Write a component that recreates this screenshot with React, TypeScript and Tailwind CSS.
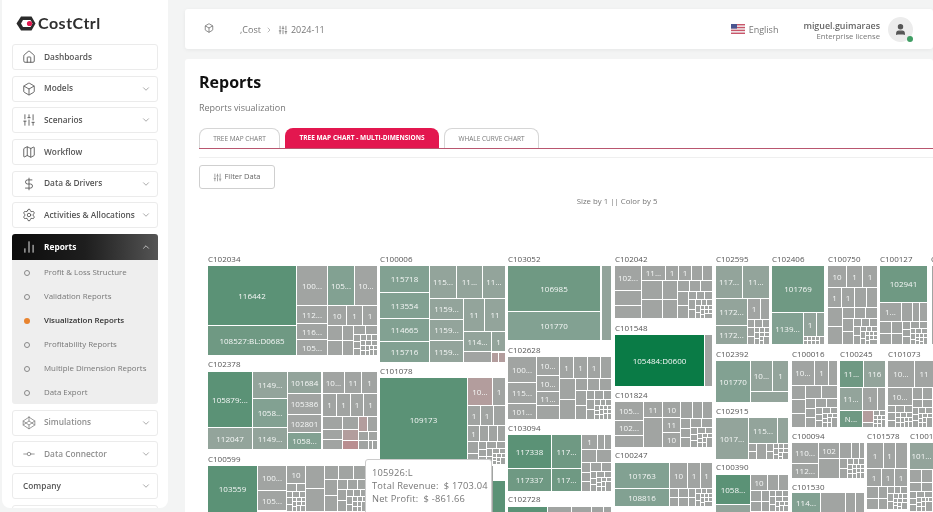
import React from 'react';
import {
  House,
  Box,
  SlidersVertical,
  Map as MapIcon,
  DollarSign,
  Settings,
  ChartNoAxesColumn,
  Codepen,
  GitCommitHorizontal,
  ChevronDown,
  ChevronUp,
  ChevronRight,
  User,
} from 'lucide-react';

type Cell = [number, number, number, number, string?, string?];

const FILLS: Record<string, string> = {
  s: '#5b9276',
  m: '#6f9983',
  l: '#82a192',
  p: '#93a49b',
  g: '#a1a4a2',
  r: '#b39d9d',
  R: '#b98e90',
  b: '#0a7b46',
};

// x1, y1, x2, y2, label, fill
const CELLS: Cell[] = [
  // C102034
  [208, 266, 296, 325, '116442', 's'],
  [208, 326, 296, 355, '108527:BL:D0685', 'm'],
  [297, 266, 327, 305, '100...'],
  [328, 266, 354, 305, '105...', 'l'],
  [355, 266, 377, 305, '10...'],
  [297, 306, 327, 323, '112...'],
  [297, 324, 327, 339, '116...'],
  [297, 340, 327, 355, '105...'],
  [328, 306, 346, 325, '10'],
  [347, 306, 362, 325, '1'],
  [363, 306, 377, 325, '1'],
  // C100006
  [380, 266, 429, 292, '115718', 'l'],
  [380, 293, 429, 318, '113554', 'l'],
  [380, 319, 429, 341, '114665', 'l'],
  [380, 342, 429, 362, '115716', 'l'],
  [430, 266, 456, 298, '115...', 'p'],
  [457, 266, 482, 298, '11...', 'p'],
  [483, 266, 505, 298, '11...', 'p'],
  [430, 299, 463, 319, '1159...', 'p'],
  [430, 320, 463, 340, '1159...', 'p'],
  [430, 341, 463, 362, '1159...', 'p'],
  [464, 299, 484, 331, '11', 'p'],
  [485, 299, 505, 331, '11', 'p'],
  [464, 332, 491, 351, '114...', 'p'],
  [492, 332, 505, 351, '1', 'p'],
  [464, 352, 491, 362],
  [492, 353, 498, 362, undefined, 'r'],
  [499, 353, 505, 362, undefined, 'r'],
  // C102378
  [208, 372, 252, 427, '105879:...', 's'],
  [208, 428, 252, 449, '112047', 'p'],
  [253, 372, 287, 398, '1149...', 'p'],
  [253, 399, 287, 427, '1058...', 'l'],
  [253, 428, 287, 449, '1149...', 'p'],
  [288, 372, 321, 393, '101684', 'p'],
  [288, 394, 321, 414, '105386'],
  [288, 415, 321, 432, '102801'],
  [288, 433, 321, 449, '1058...', 'l'],
  [323, 372, 344, 393, '10...'],
  [345, 372, 361, 393, '11'],
  [362, 372, 377, 393, '1'],
  [323, 394, 336, 416, '1'],
  [337, 394, 350, 416, '1'],
  [351, 394, 363, 416, '1'],
  [364, 394, 377, 416, '1'],
  [323, 417, 342, 429],
  [323, 430, 342, 439],
  [323, 440, 342, 449],
  [343, 417, 358, 429],
  [343, 430, 358, 440, undefined, 'r'],
  [343, 441, 358, 449, undefined, 'R'],
  [359, 417, 367, 431, undefined, 'r'],
  [368, 417, 377, 431],
  [359, 432, 368, 440],
  [369, 432, 377, 440],
  [359, 441, 368, 449],
  [369, 441, 372, 449],
  [373, 441, 377, 449],
  // C100599
  [208, 466, 257, 512, '103559', 's'],
  [258, 466, 286, 490, '100...'],
  [258, 491, 286, 510, '105...'],
  [287, 466, 305, 483, '10'],
  [493, 481, 505, 512, undefined, 's'],
  // C101078
  [380, 378, 467, 462, '109173', 's'],
  [468, 378, 492, 405, '10...', 'r'],
  [493, 378, 505, 405, '1'],
  [468, 406, 480, 425, '1'],
  [481, 406, 493, 425, '1'],
  [494, 406, 505, 425],
  [468, 426, 479, 441, '1'],
  [480, 426, 488, 441],
  [489, 426, 497, 441],
  [498, 426, 505, 441],
  // C103052
  [508, 266, 600, 311, '106985', 'm'],
  [508, 312, 600, 340, '101770', 'l'],
  [602, 266, 611, 340, undefined, 'p'],
  // C102628
  [508, 357, 536, 382, '100...'],
  [508, 383, 536, 403, '115...'],
  [508, 404, 536, 419, '101...'],
  [537, 357, 559, 375, '10...'],
  [537, 376, 559, 391, '10...'],
  [537, 392, 559, 405, '11...'],
  [537, 406, 559, 419],
  [560, 357, 573, 378, '1'],
  [574, 357, 587, 378, '1'],
  [588, 357, 600, 378, '1'],
  [601, 357, 611, 378],
  // C103094
  [508, 435, 551, 468, '117338', 's'],
  [508, 469, 551, 491, '117337', 'm'],
  [552, 435, 581, 468, '117...', 'm'],
  [552, 469, 581, 491, '117...', 'm'],
  [582, 435, 597, 449, '1'],
  [598, 435, 604, 449],
  [605, 435, 611, 449],
  // C102728
  [508, 507, 547, 512, undefined, 's'],
  [548, 507, 571, 512],
  [572, 507, 591, 512],
  [592, 507, 603, 512],
  [604, 507, 611, 512],
  // C102042
  [615, 266, 641, 290, '102...'],
  [615, 291, 641, 305],
  [615, 306, 641, 318],
  [642, 266, 665, 280, '11...'],
  [666, 266, 678, 280, '1'],
  [679, 266, 691, 280, '1'],
  [692, 266, 702, 280],
  [703, 266, 712, 280],
  // C101548
  [615, 335, 704, 386, '105484:D0600', 'b'],
  [705, 335, 712, 386],
  // C101824
  [615, 402, 643, 420, '105...'],
  [615, 421, 643, 435, '102...'],
  [615, 436, 643, 447],
  [644, 402, 662, 417, '11'],
  [663, 402, 680, 417, '10'],
  [644, 418, 662, 447],
  [663, 418, 680, 432, '11'],
  [663, 433, 680, 447, '10'],
  [681, 402, 692, 418],
  [693, 402, 702, 418],
  [703, 402, 712, 418],
  // C100247
  [615, 463, 669, 488, '101763', 'l'],
  [615, 489, 669, 506, '108816', 'l'],
  [670, 463, 687, 488, '10'],
  [688, 463, 700, 488, '1'],
  [701, 463, 712, 488, '1'],
  // C102595
  [716, 266, 742, 298, '117...', 'p'],
  [743, 266, 769, 298, '11...', 'p'],
  [716, 299, 747, 325, '1172...', 'p'],
  [716, 326, 747, 344, '1172...', 'p'],
  [748, 299, 760, 319, '1'],
  [761, 299, 769, 319],
  // C102406
  [772, 266, 824, 312, '101769', 'm'],
  [772, 313, 803, 344, '1139...', 'l'],
  [804, 313, 816, 336, '1', 'p'],
  [817, 313, 824, 336, undefined, 'p'],
  // C100750
  [828, 266, 846, 287, '10'],
  [847, 266, 862, 287, '1'],
  [863, 266, 877, 287, '1'],
  [828, 288, 841, 307, '1'],
  [842, 288, 854, 307, '1'],
  [855, 288, 866, 307],
  [867, 288, 877, 307],
  // C100127
  [880, 266, 927, 302, '102941', 'm'],
  [880, 303, 901, 321, '1...'],
  [902, 303, 912, 321],
  [913, 303, 919, 321],
  [920, 303, 927, 321],
  [932, 266, 933, 344],
  // C102392
  [716, 361, 750, 402, '101770', 'l'],
  [751, 361, 772, 391, '10...', 'p'],
  [773, 361, 788, 391, '1', 'p'],
  [751, 392, 788, 402, undefined, 'p'],
  // C102915
  [716, 418, 748, 459, '1017...', 'p'],
  [749, 418, 777, 443, '115...', 'p'],
  [778, 418, 788, 443, undefined, 'p'],
  // C100390
  [716, 475, 750, 504, '1058...', 's'],
  [716, 505, 750, 512, undefined, 'p'],
  [751, 475, 767, 490, '10'],
  [768, 475, 778, 490],
  [779, 475, 788, 490],
  // C100016
  [792, 361, 814, 385, '10...'],
  [815, 361, 828, 385, '1'],
  [829, 361, 837, 385],
  // C100245
  [840, 361, 863, 387, '11...', 'm'],
  [864, 361, 885, 387, '116', 'p'],
  [840, 388, 862, 410, '11...', 'p'],
  [863, 388, 877, 410, '1'],
  [878, 388, 885, 410],
  [840, 411, 862, 427, 'N...', 'm'],
  [863, 411, 873, 422, undefined, 'r'],
  // C101073
  [888, 361, 914, 387, '10...'],
  [915, 361, 933, 387, '11'],
  [888, 388, 912, 405, '10...'],
  // C100094
  [792, 443, 818, 463, '110...'],
  [792, 464, 818, 478, '112...'],
  [819, 443, 839, 458, '102'],
  [819, 459, 839, 478],
  [840, 443, 851, 458],
  [852, 443, 859, 458],
  [860, 443, 864, 458],
  // C101530
  [792, 493, 820, 512, '114...', 'l'],
  [821, 493, 845, 512],
  [846, 493, 855, 512],
  [856, 493, 864, 512],
  // C101578
  [867, 443, 883, 468, '1'],
  [884, 443, 895, 468, '1'],
  [896, 443, 907, 468],
  [867, 469, 881, 486, '1'],
  [882, 469, 894, 486, '1'],
  [895, 469, 907, 486, '1'],
  // C1001..
  [910, 443, 933, 469, '101...', 'p'],
];

// regions filled with many small unlabeled cells
const TILED: [number, number, number, number][] = [
  [328, 326, 378, 356],
  [287, 484, 306, 512],
  [306, 466, 368, 512],
  [468, 442, 506, 465],
  [560, 379, 612, 420],
  [582, 450, 612, 492],
  [642, 281, 713, 319],
  [681, 419, 713, 448],
  [670, 489, 713, 507],
  [748, 320, 770, 345],
  [804, 337, 825, 345],
  [828, 308, 878, 345],
  [880, 322, 928, 345],
  [749, 444, 789, 460],
  [751, 491, 789, 512],
  [792, 386, 838, 428],
  [874, 411, 886, 428],
  [863, 423, 874, 428],
  [913, 388, 933, 428],
  [888, 406, 913, 428],
  [840, 459, 865, 479],
  [867, 487, 908, 510],
  [910, 470, 933, 512],
];

const GROUPS: [string, number, number][] = [
  ['C102034', 208, 259],
  ['C100006', 380, 259],
  ['C103052', 508, 259],
  ['C102042', 615, 259],
  ['C102595', 716, 259],
  ['C102406', 772, 259],
  ['C100750', 828, 259],
  ['C100127', 880, 259],
  ['C', 931, 259],
  ['C102378', 208, 364],
  ['C101078', 380, 371],
  ['C102628', 508, 350],
  ['C101548', 615, 328],
  ['C102392', 716, 354],
  ['C100016', 792, 354],
  ['C100245', 840, 354],
  ['C101073', 888, 354],
  ['C100599', 208, 459],
  ['C103094', 508, 428],
  ['C101824', 615, 395],
  ['C102915', 716, 411],
  ['C100094', 792, 436],
  ['C101578', 867, 436],
  ['C1001', 910, 436],
  ['C102728', 508, 499],
  ['C100247', 615, 455],
  ['C100390', 716, 467],
  ['C101530', 792, 487],
];

function tile(x: number, y: number, w: number, h: number, out: number[][]) {
  if (w < 8 || h < 6 || w * h < 45) {
    out.push([x, y, w, h]);
    return;
  }
  const horizontal = w >= h;
  const long = horizontal ? w : h;
  const cross = horizontal ? h : w;
  const t = Math.max(4, Math.round(long > 2 * cross ? cross * 0.5 : long * 0.3));
  const parts = Math.max(1, Math.round(cross / (t * 1.1)));
  for (let i = 0; i < parts; i++) {
    const a = Math.round((cross * i) / parts);
    const b = Math.round((cross * (i + 1)) / parts);
    if (horizontal) out.push([x, y + a, t, b - a]);
    else out.push([x + a, y, b - a, t]);
  }
  if (horizontal) tile(x + t, y, w - t, h, out);
  else tile(x, y + t, w, h - t, out);
}

function TreeMap() {
  const small: number[][] = [];
  TILED.forEach(([x1, y1, x2, y2]) => tile(x1, y1, x2 - x1, y2 - y1, small));

  return (
    <svg width={733} height={262} viewBox="200 250 733 262" className="block">
      {small.map(([x, y, w, h], i) => (
        <rect key={i} x={x} y={y} width={Math.max(w - 1, 0.5)} height={Math.max(h - 1, 0.5)} fill={FILLS.g} />
      ))}
      {/* strip of even columns under the tooltip */}
      {Array.from({ length: 6 }).map((_, i) => (
        <rect key={i} x={368 + i * 21} y={466} width={20} height={46} fill={FILLS.g} />
      ))}
      {CELLS.map(([x1, y1, x2, y2, label, fill], i) => (
        <g key={i}>
          <rect x={x1} y={y1} width={x2 - x1} height={y2 - y1} fill={FILLS[fill ?? 'g']} />
          {label && (
            <text x={(x1 + x2) / 2} y={(y1 + y2) / 2 + 3} textAnchor="middle" fontSize={8} fontWeight={500} fill="#f5f7f6">
              {label}
            </text>
          )}
        </g>
      ))}
      {GROUPS.map(([name, x, y]) => (
        <text key={name + x} x={x} y={y + 3} fontSize={8} fill="#555">
          {name}
        </text>
      ))}
    </svg>
  );
}

function CostCtrlLogo() {
  return (
    <svg width={20} height={15} viewBox="0 0 20 15">
      <path d="M5 0.5H15.5L19.5 7.5L15.5 14.5H5L0.5 7.5Z" fill="#2b2b2b" />
      <path d="M7 4H14.5L16.5 7.5L14.5 11H7L5 7.5Z" fill="#ffffff" />
      <circle cx={13.5} cy={7.5} r={2.6} fill="#e3174f" />
    </svg>
  );
}

function UsFlag() {
  return (
    <svg width={14} height={10} viewBox="0 0 14 10">
      <rect width={14} height={10} fill="#f2f2f2" />
      <rect y={0} width={14} height={1.4} fill="#c9566a" />
      <rect y={2.85} width={14} height={1.4} fill="#c9566a" />
      <rect y={5.7} width={14} height={1.4} fill="#c9566a" />
      <rect y={8.6} width={14} height={1.4} fill="#c9566a" />
      <rect width={6} height={4.6} fill="#4a5590" />
    </svg>
  );
}

function NavItem({
  icon: Icon,
  label,
  chevron = false,
  muted = false,
}: {
  icon: React.ElementType;
  label: string;
  chevron?: boolean;
  muted?: boolean;
}) {
  return (
    <div className="flex h-[26px] shrink-0 items-center rounded-[3px] border border-[#ebebeb] bg-white">
      <Icon className={`ml-[9px] h-[14px] w-[14px] ${muted ? 'text-[#8a8a8a]' : 'text-[#555]'}`} strokeWidth={1.5} />
      <span className={`ml-[8px] flex-1 text-[8.3px] font-semibold ${muted ? 'text-[#8f8f8f]' : 'text-[#555]'}`}>{label}</span>
      {chevron && <ChevronDown className="mr-[6px] h-[10px] w-[10px] text-[#777]" strokeWidth={1.5} />}
    </div>
  );
}

function SubItem({ label, active = false }: { label: string; active?: boolean }) {
  return (
    <div className="flex h-[24px] items-center">
      {active ? (
        <span className="ml-[12px] h-[6px] w-[6px] rounded-full bg-[#e8832e]" />
      ) : (
        <span className="ml-[12px] h-[6px] w-[6px] rounded-full border border-[#888]" />
      )}
      <span className={`ml-[14px] text-[7.9px] ${active ? 'font-semibold text-[#333]' : 'text-[#777]'}`}>{label}</span>
    </div>
  );
}

function Sidebar() {
  return (
    <aside className="ml-[2px] h-[508px] w-[166px] shrink-0 overflow-hidden rounded-br-lg rounded-bl-lg bg-white px-[10px]">
      <div className="flex h-[44px] items-center pt-[2px] pl-[4px]">
        <CostCtrlLogo />
        <span className="ml-[2px] font-['Lato',sans-serif] text-[16px] leading-none font-bold tracking-[0.5px] text-[#2f2f2f]">CostCtrl</span>
      </div>
      <div className="flex flex-col gap-[5.67px]">
        <NavItem icon={House} label="Dashboards" />
        <NavItem icon={Box} label="Models" chevron />
        <NavItem icon={SlidersVertical} label="Scenarios" chevron />
        <NavItem icon={MapIcon} label="Workflow" />
        <NavItem icon={DollarSign} label="Data & Drivers" chevron />
        <NavItem icon={Settings} label="Activities & Allocations" chevron />
        <div className="shrink-0">
          <div className="flex h-[26px] items-center rounded-t-[3px] bg-gradient-to-r from-[#0c0c0c] via-[#1e1e1e] to-[#555]">
            <ChartNoAxesColumn className="ml-[10px] h-[14px] w-[14px] text-white" strokeWidth={1.5} />
            <span className="ml-[8px] flex-1 text-[8.3px] font-bold text-white">Reports</span>
            <ChevronUp className="mr-[7px] h-[10px] w-[10px] text-white" strokeWidth={1.5} />
          </div>
          <div className="h-[144px] rounded-b-[3px] bg-[#eeeeee] pt-[1px]">
            <SubItem label="Profit & Loss Structure" />
            <SubItem label="Validation Reports" />
            <SubItem label="Visualization Reports" active />
            <SubItem label="Profitability Reports" />
            <SubItem label="Multiple Dimension Reports" />
            <SubItem label="Data Export" />
          </div>
        </div>
        <NavItem icon={Codepen} label="Simulations" chevron muted />
        <NavItem icon={GitCommitHorizontal} label="Data Connector" chevron muted />
        <div className="flex h-[26px] shrink-0 items-center rounded-[3px] border border-[#ebebeb] bg-white">
          <span className="ml-[10px] flex-1 text-[8.3px] font-semibold text-[#555]">Company</span>
          <ChevronDown className="mr-[6px] h-[10px] w-[10px] text-[#777]" strokeWidth={1.5} />
        </div>
        <div className="h-[26px] shrink-0 rounded-[3px] border border-[#ebebeb] bg-white" />
      </div>
    </aside>
  );
}

function TopBar() {
  return (
    <header className="flex h-[40px] shrink-0 items-center rounded-[3px] bg-white shadow-[0_1px_4px_rgba(0,0,0,0.06)]">
      <Box className="mb-[2px] ml-[19px] h-[10px] w-[10px] text-[#555]" strokeWidth={1.6} />
      <div className="ml-[26px] flex items-center pt-[1px] text-[9px] text-[#777]">
        <span>,Cost</span>
        <ChevronRight className="mr-[5px] ml-[4px] h-[8px] w-[8px]" strokeWidth={1.5} />
        <SlidersVertical className="mr-[3px] h-[10px] w-[10px] text-[#555]" strokeWidth={1.6} />
        <span>2024-11</span>
      </div>
      <div className="ml-auto flex items-center pr-[20px]">
        <UsFlag />
        <span className="ml-[4px] pt-[1px] text-[9px] text-[#777]">English</span>
        <div className="ml-[25px] pt-[3px] text-right">
          <div className="text-[8.9px] leading-[10px] font-semibold text-[#666]">miguel.guimaraes</div>
          <div className="text-[7.7px] leading-[10px] text-[#777]">Enterprise license</div>
        </div>
        <div className="relative ml-[8px] flex h-[25px] w-[25px] items-center justify-center rounded-full bg-[#ececec]">
          <User className="h-[13px] w-[13px] fill-[#555] text-[#555]" />
          <span className="absolute right-[0px] bottom-[0px] h-[6px] w-[6px] rounded-full bg-[#3f9d63]" />
        </div>
      </div>
    </header>
  );
}

export default function App() {
  return (
    <div className="flex h-[512px] w-[933px] overflow-hidden bg-[#f3f4f4] font-['Open_Sans',sans-serif] blur-[0.3px]">
      <Sidebar />
      <main className="ml-[17px] flex min-w-0 flex-1 flex-col pt-[9px]">
        <TopBar />
        <section className="mt-[10px] flex-1 overflow-hidden rounded-t-[3px] bg-white pl-[14px]">
          <h1 className="mt-[11px] text-[16px] leading-[24px] font-bold text-[#111]">Reports</h1>
          <p className="mt-[8px] text-[9px] leading-[12px] text-[#777]">Reports visualization</p>

          <div className="mt-[14px] flex gap-[5px] border-b border-[#b9566f]">
            <div className="flex h-[20px] w-[81px] items-center justify-center rounded-t-lg border border-b-0 border-[#d6d6d6] text-[6.5px] text-[#777]">TREE MAP CHART</div>
            <div className="flex h-[20px] w-[154px] items-center justify-center rounded-t-lg bg-[#e3174f] text-[6.5px] font-bold text-white">TREE MAP CHART - MULTI-DIMENSIONS</div>
            <div className="flex h-[20px] w-[95px] items-center justify-center rounded-t-lg border border-b-0 border-[#d6d6d6] text-[6.5px] text-[#777]">WHALE CURVE CHART</div>
          </div>
          <div className="mt-[8px] h-px bg-[#efefef]" />

          <button className="mt-[7px] flex h-[24px] w-[76px] items-center justify-center gap-[2px] rounded-[3px] border border-[#cfcfcf] text-[7.5px] text-[#666]">
            <SlidersVertical className="h-[9px] w-[9px]" strokeWidth={1.6} />
            Filter Data
          </button>

          <div className="mt-[7px] w-[836px] text-center text-[7.8px] leading-[10px] text-[#777]">Size by 1 || Color by 5</div>

          <div className="relative mt-[44px] ml-[1px] w-[733px]">
            <TreeMap />
            <div className="absolute top-[209px] left-[165px] h-[60px] w-[127px] rounded-[3px] border border-[#ccc] bg-white px-[6px] pt-[6px] text-[9.3px] leading-[13px] tracking-[0.2px] whitespace-nowrap text-[#777]">
              <div>105926:L</div>
              <div>Total Revenue:&nbsp;&nbsp;$ 1703.04</div>
              <div>Net Profit:&nbsp;&nbsp;$ -861.66</div>
            </div>
          </div>
        </section>
      </main>
    </div>
  );
}
